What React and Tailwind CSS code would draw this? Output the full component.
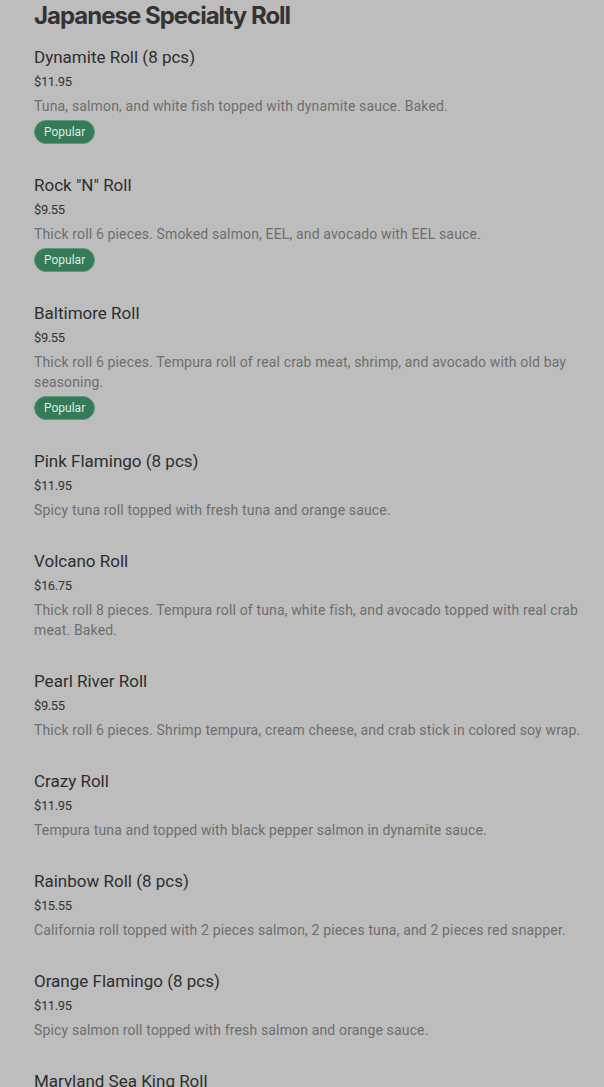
import React from "react";

const items = [
  { name: "Dynamite Roll (8 pcs)", price: "$11.95", desc: "Tuna, salmon, and white fish topped with dynamite sauce. Baked.", popular: true },
  { name: 'Rock "N" Roll', price: "$9.55", desc: "Thick roll 6 pieces. Smoked salmon, EEL, and avocado with EEL sauce.", popular: true },
  { name: "Baltimore Roll", price: "$9.55", desc: "Thick roll 6 pieces. Tempura roll of real crab meat, shrimp, and avocado with old bay seasoning.", popular: true },
  { name: "Pink Flamingo (8 pcs)", price: "$11.95", desc: "Spicy tuna roll topped with fresh tuna and orange sauce." },
  { name: "Volcano Roll", price: "$16.75", desc: "Thick roll 8 pieces. Tempura roll of tuna, white fish, and avocado topped with real crab meat. Baked." },
  { name: "Pearl River Roll", price: "$9.55", desc: "Thick roll 6 pieces. Shrimp tempura, cream cheese, and crab stick in colored soy wrap." },
  { name: "Crazy Roll", price: "$11.95", desc: "Tempura tuna and topped with black pepper salmon in dynamite sauce." },
  { name: "Rainbow Roll (8 pcs)", price: "$15.55", desc: "California roll topped with 2 pieces salmon, 2 pieces tuna, and 2 pieces red snapper." },
  { name: "Orange Flamingo (8 pcs)", price: "$11.95", desc: "Spicy salmon roll topped with fresh salmon and orange sauce." },
  { name: "Maryland Sea King Roll", price: "$13.95", desc: "Crab meat and shrimp tempura topped with salmon." },
];

const App = () => {
  return (
    <div className="h-[1087px] overflow-hidden bg-[#bdbdbd] pl-[34px] pr-[16px] font-['Roboto',sans-serif]">
      <h2 className="text-[24px] leading-8 font-bold text-[#333] tracking-[-1px] font-['Inter',sans-serif]">
        Japanese Specialty Roll
      </h2>

      <div className="mt-[13px] flex flex-col gap-[29px]">
        {items.map((item) => (
          <div key={item.name} className="flex flex-col items-start">
            <div className="text-[17px] leading-6 text-[#2e2e2e]">{item.name}</div>
            <div className="mt-[3px] text-[13px] leading-5 tracking-[-0.4px] text-[#333]">{item.price}</div>
            <div className="mt-1 text-[14px] leading-5 tracking-[0.15px] text-[#6e6e6e]">{item.desc}</div>
            {item.popular && (
              <span className="mt-1 h-6 px-[9px] rounded-full bg-[#357a59] border border-[#5a9a7a] text-[12px] leading-[22px] text-[#d8ece0]">
                Popular
              </span>
            )}
          </div>
        ))}
      </div>
    </div>
  );
};

export default App;
